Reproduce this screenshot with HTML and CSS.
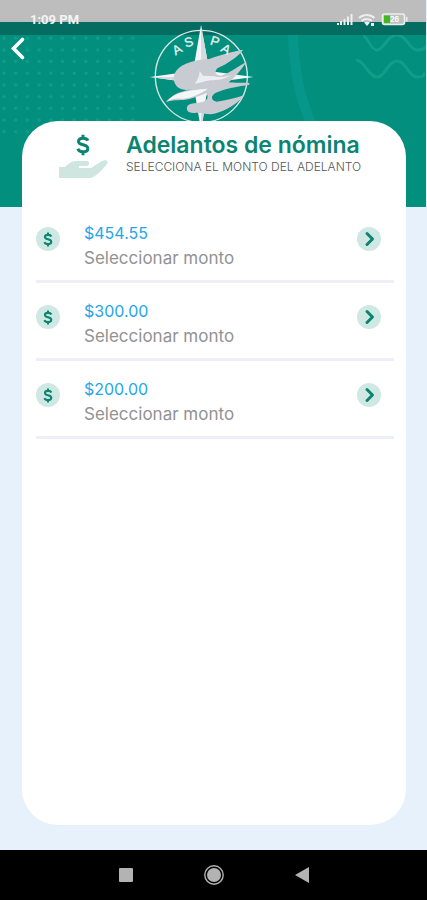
FILE: index.html
```html
<!DOCTYPE html>
<html lang="es">
<head>
<meta charset="utf-8">
<meta name="viewport" content="width=device-width, initial-scale=1">
<title>Adelantos de nómina</title>
<link rel="stylesheet" href="styles.css">
</head>
<body>
<svg class="defs" aria-hidden="true">
  <symbol id="dollar" viewBox="0 0 14 22">
    <path d="M12 6.6C11.2 4.9 9.5 4.2 7 4.2c-2.700 0-4.500 1.200-4.500 3.200 0 4.600 9.300 2 9.300 7 0 2.200-2 3.400-4.800 3.400-2.700 0-4.500-1-5.200-3M7 .8v3.600M7 17.600v3.600" fill="none" stroke="currentColor" stroke-width="3"/>
  </symbol>
  <symbol id="chevron" viewBox="0 0 24 24">
    <path d="M10 6.500l5.500 5.500-5.500 5.500" fill="none" stroke="currentColor" stroke-width="3" stroke-linecap="round" stroke-linejoin="round"/>
  </symbol>
</svg>

<header class="hero">
  <svg class="decor" viewBox="0 0 427 207" preserveAspectRatio="xMaxYMin slice" aria-hidden="true">
    <defs>
      <pattern id="dots" x="-1" y="32" width="11.700" height="11.700" patternUnits="userSpaceOnUse">
        <circle cx="6" cy="6" r="1.700"/>
      </pattern>
    </defs>
    <rect class="dots" x="0" y="32" width="139" height="104" fill="url(#dots)"/>
    <path class="ring" d="M294 35C295 70 300 98 313 125"/>
    <path class="wave" d="M364 36c5 0 7 14 14 14s10-15 20-15 12 15 20 15 7-2 10-4M357 60c8 0 13 17 21 17s11-16 20-16 12 16 20 16 6-2 8-4"/>
  </svg>
  <div class="status">
    <span class="clock">1:09 PM</span>
    <svg class="signals" viewBox="0 0 72 15" aria-hidden="true">
      <path d="M1 13h2v-2H1zM4 13h2V9H4zM7.500 13h2V7h-2zM11 13h2V4.500h-2zM14.500 13h2V2h-2z" fill="#eee"/>
      <path d="M23 6c4.500-4 11-4 15.500 0M25.500 9c3-2.600 7.500-2.600 10.500 0" fill="none" stroke="#eee" stroke-width="2"/>
      <path d="M28 10.500c2-1 4-1 6 0L31 14zM35 11h3v3h-3z" fill="#eee"/>
      <rect x="46.500" y="2" width="22" height="10.500" rx="2" fill="#b9c4bf" stroke="#eee" stroke-width="1.600"/>
      <rect x="48" y="3.500" width="6" height="7.500" fill="#3fb91e"/>
      <path d="M70 5h1.500v4.500H70z" fill="#eee"/>
      <text x="54" y="10" font-size="7" font-weight="700" fill="#fff">26</text>
    </svg>
  </div>
  <div class="bar">
    <button class="back" type="button" aria-label="Atrás">
      <svg viewBox="0 0 16 24" aria-hidden="true"><path d="M12.500 3L3.500 12l9 9" fill="none" stroke="#fff" stroke-width="3.600" stroke-linecap="round"/></svg>
    </button>
    <svg class="logo" viewBox="0 0 360 345" role="img" aria-label="ASPA">
      <circle cx="184" cy="184" r="138" fill="none" stroke="#dbe9e8" stroke-width="4"/>
      <path d="M183 30l20 110 20 30 118 16-118 16-24 40-16 103-17-103-22-40-114-16 114-16 20-30z" fill="#f4f6f7"/>
      <path d="M183 30l20 110-20 40zM30 186h152v16h-38zM183 300l16-40-16 85z" fill="#d5dade"/>
      <path d="M310 104C276 110 238 120 208 132C170 134 130 142 110 166C98 182 98 202 112 216C124 226 142 226 156 223C132 228 106 234 92 248C84 254 80 258 78 262C100 252 126 258 148 252C170 246 186 240 200 234C206 248 202 258 184 262C164 266 146 264 141 276C138 290 150 296 168 293C188 292 206 302 228 295C258 286 294 266 314 240C286 250 258 256 230 260C212 256 212 244 226 234C256 220 296 214 328 209V204C300 203 284 204 266 202C286 186 304 164 320 140C292 156 268 174 244 182C226 182 222 172 232 160C262 146 290 128 310 104Z" fill="#c9cbd2"/>
      <path d="M80 259c20-24 60-34 124-38-24 16-58 32-84 30-16-1-28 3-40 8z" fill="#f5f6f8"/>
      <path d="M164 206c10-12 14-24 15-38l10 14 32 2c16 4 32 3 54-4-22 12-40 16-64 16-16 1-30 10-47 10z" fill="#eceef1"/>
      <g fill="#e4efed" stroke="#e4efed" font-size="39" text-anchor="middle">
        <text transform="translate(118 115) rotate(-30)">A</text>
        <text transform="translate(150 94) rotate(-16)">S</text>
        <text transform="translate(221 92) rotate(18)">P</text>
        <text transform="translate(251 114) rotate(30)">A</text>
      </g>
    </svg>
  </div>
</header>

<main class="card">
  <div class="heading">
    <svg class="hand" viewBox="0 0 52 46" aria-hidden="true">
      <use href="#dollar" x="18" y="1" width="14" height="22"/>
      <path d="M1 34h6c4-4 7-6 12-6h10c3 0 3 5-1 5h-7v2h12l11-7c4-2 7 0 5 3-5 6-10 12-16 14H1z" fill="#cfe5e0"/>
    </svg>
    <div class="titles">
      <h1>Adelantos de nómina</h1>
      <p>SELECCIONA EL MONTO DEL ADELANTO</p>
    </div>
  </div>
  <ul class="amounts">
    <li><button type="button">
      <span class="disc"><svg class="coin"><use href="#dollar"/></svg></span>
      <span class="text"><span class="amount">$454.55</span><span class="hint">Seleccionar monto</span></span>
      <span class="disc"><svg class="go"><use href="#chevron"/></svg></span>
    </button></li>
    <li><button type="button">
      <span class="disc"><svg class="coin"><use href="#dollar"/></svg></span>
      <span class="text"><span class="amount">$300.00</span><span class="hint">Seleccionar monto</span></span>
      <span class="disc"><svg class="go"><use href="#chevron"/></svg></span>
    </button></li>
    <li><button type="button">
      <span class="disc"><svg class="coin"><use href="#dollar"/></svg></span>
      <span class="text"><span class="amount">$200.00</span><span class="hint">Seleccionar monto</span></span>
      <span class="disc"><svg class="go"><use href="#chevron"/></svg></span>
    </button></li>
  </ul>
</main>

<nav class="keys" aria-label="Sistema">
  <button type="button" aria-label="Recientes"><svg viewBox="0 0 24 24"><rect x="5" y="5" width="14" height="14" rx="1" fill="#b3b3b3"/></svg></button>
  <button type="button" aria-label="Inicio"><svg viewBox="0 0 24 24"><circle cx="12" cy="12" r="9.200" fill="none" stroke="#b3b3b3" stroke-width="1.400"/><circle cx="12" cy="12" r="7" fill="#b3b3b3"/></svg></button>
  <button type="button" aria-label="Volver"><svg viewBox="0 0 24 24"><path d="M5 12l14-8v16z" fill="#b3b3b3"/></svg></button>
</nav>
</body>
</html>
```

FILE: styles.css
```css
* { box-sizing: border-box; }

body {
  margin: 0;
  min-height: 100vh;
  display: flex;
  flex-direction: column;
  background: #e7f1fb;
  font-family: Inter, "Liberation Sans", sans-serif;
}

button {
  border: 0;
  padding: 0;
  background: none;
  font: inherit;
  text-align: left;
  cursor: pointer;
}

svg { display: block; }

.defs { position: absolute; width: 0; height: 0; }

.hero {
  position: relative;
  height: 207px;
  margin-right: 1px;
  overflow: hidden;
  background: #028f7e;
}

.decor { position: absolute; inset: 0; width: 100%; height: 100%; }
.decor pattern circle { fill: #129c8a; }
.ring { fill: none; stroke: #06978a; stroke-width: 10; }
.wave { fill: none; stroke: #129c8a; stroke-width: 3; }

.status {
  position: relative;
  display: flex;
  justify-content: space-between;
  height: 35px;
  padding: 12px 18px 0 30px;
  background: linear-gradient(#bdbdbd 22px, #046c60 22px);
}

.clock {
  color: #f4f4f4;
  font: 700 13px/16px Roboto, sans-serif;
}

.signals { width: 72px; height: 15px; }

.bar {
  position: relative;
  display: grid;
  grid-template-columns: 1fr 120px 1fr;
  align-items: start;
}

.back { width: 16px; margin-left: 10px; }
.back svg { width: 16px; height: 27px; }

.logo {
  width: 120px;
  margin: -20px 0 0 -13px;
  font-family: "Liberation Sans", sans-serif;
}

.card {
  position: relative;
  flex: 1;
  margin: -86px 21px 25px 22px;
  padding: 12px 12px 0 14px;
  border-radius: 36px;
  background: #fff;
}

.heading {
  display: flex;
  gap: 16px;
  padding-left: 22px;
}

.hand { flex: none; width: 52px; height: 46px; color: #0b8472; }

.titles { white-space: nowrap; }

h1 {
  margin: 0;
  color: #0b8472;
  font-size: 23px;
  font-weight: 600;
  line-height: 25px;
}

.titles p {
  margin: 0;
  color: #555;
  font-size: 12px;
  font-weight: 300;
  line-height: 18px;
}

.amounts {
  margin: 26px 0 0;
  padding: 0;
  list-style: none;
}

.amounts li { border-bottom: 3px solid #eceff5; }

.amounts button {
  display: flex;
  align-items: flex-start;
  width: 100%;
  height: 75px;
  padding: 18px 13px 0 0;
}

.disc {
  display: grid;
  place-items: center;
  width: 24px;
  height: 24px;
  margin-top: 4px;
  border-radius: 50%;
  background: #d0e8e3;
  color: #0b8472;
}

.coin { width: 10px; height: 15px; }
.go { width: 24px; height: 24px; }

.text { flex: 1; padding-left: 24px; }
.text span { display: block; line-height: 25px; }
.amount { margin-top: -2px; color: #27a5e8; font-size: 16px; }
.hint { color: #929292; font-size: 17px; }

.keys {
  display: flex;
  justify-content: center;
  gap: 64px;
  height: 50px;
  align-items: center;
  background: #000;
}

.keys svg { width: 24px; height: 24px; }
```
